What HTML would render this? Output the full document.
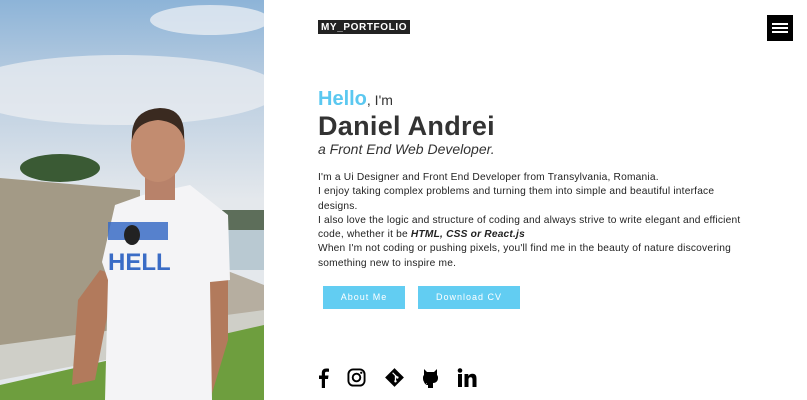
<!DOCTYPE html>
<html><head><style>
*{margin:0;padding:0;box-sizing:border-box}
body{width:807px;height:400px;overflow:hidden;background:#fff;font-family:"Liberation Sans",sans-serif;position:relative}
.photo{position:absolute;left:0;top:0;width:264px;height:400px}
.logo{position:absolute;left:318px;top:20px;background:#222;color:#fff;font-weight:bold;font-size:10px;letter-spacing:.6px;padding:1px 3px;height:14px;line-height:13px}
.menu{position:absolute;left:767px;top:15px;width:26px;height:26px;background:#000}
.menu i{position:absolute;left:5px;width:16px;height:2px;background:#fff}
.hello{position:absolute;left:318px;top:88px;font-size:14px;color:#333}
.hello b{color:#5bc8f0;font-size:20px}
h1{position:absolute;left:318px;top:111px;font-size:27px;color:#333;font-weight:bold;letter-spacing:.3px}
.sub{position:absolute;left:318px;top:141px;font-size:14px;font-style:italic;color:#333}
.p{position:absolute;left:318px;top:171px;font-size:10.2px;line-height:14.3px;color:#222;width:426px;letter-spacing:.2px}
.btn{position:absolute;top:286px;height:23px;background:#62cdf2;color:#fff;font-size:9px;letter-spacing:1px;text-align:center;line-height:23px}
.soc{position:absolute;top:368px}
</style></head><body>
<svg class="photo" viewBox="0 0 264 400">
<defs><linearGradient id="s" x1="0" y1="0" x2="0" y2="1"><stop offset="0" stop-color="#8db4d8"/><stop offset=".2" stop-color="#b8cce0"/><stop offset=".5" stop-color="#e4e8ec"/></linearGradient></defs>
<rect width="264" height="400" fill="url(#s)"/>
<ellipse cx="120" cy="90" rx="160" ry="35" fill="#eef0f2" opacity=".7"/>
<ellipse cx="210" cy="20" rx="60" ry="15" fill="#f2f4f6" opacity=".7"/>
<rect x="222" y="210" width="42" height="60" fill="#b9c9d2"/>
<rect x="222" y="210" width="42" height="20" fill="#5d6e5a"/>
<ellipse cx="60" cy="168" rx="40" ry="14" fill="#3a5a34"/>
<polygon points="0,178 140,190 140,350 0,355" fill="#a39a86"/>
<polygon points="225,270 264,285 264,320 225,320" fill="#b6aea0"/>
<polygon points="0,345 264,310 264,330 0,380" fill="#cfcfc8"/>
<polygon points="0,385 264,325 264,400 0,400" fill="#6e9e3e"/>
<polygon points="100,270 115,275 95,380 72,385 78,300" fill="#b27a5c"/>
<polygon points="205,275 228,275 228,340 210,400 190,400 200,330" fill="#b27a5c"/>
<polygon points="143,195 190,185 228,215 230,280 210,282 212,400 105,400 108,280 102,262 115,205" fill="#f4f4f6"/>
<rect x="145" y="170" width="30" height="30" fill="#b8826a"/>
<ellipse cx="158" cy="146" rx="27" ry="36" fill="#c28c70"/>
<path d="M132 140 Q130 110 160 108 Q186 108 184 140 Q180 122 158 120 Q136 122 132 140Z" fill="#3a2a20"/>
<text x="108" y="270" font-family="Liberation Sans" font-weight="bold" font-size="24" fill="#3a6cc6">HELL</text>
<rect x="108" y="222" width="60" height="18" fill="#3a6cc6" opacity=".85"/>
<ellipse cx="132" cy="235" rx="8" ry="10" fill="#222"/>
</svg>
<div class="logo">MY_PORTFOLIO</div>
<div class="menu"><i style="top:8px"></i><i style="top:12px"></i><i style="top:16px"></i></div>
<div class="hello"><b>Hello</b>, I'm</div>
<h1>Daniel Andrei</h1>
<div class="sub">a Front End Web Developer.</div>
<div class="p">I'm a Ui Designer and Front End Developer from Transylvania, Romania.<br>I enjoy taking complex problems and turning them into simple and beautiful interface designs.<br>I also love the logic and structure of coding and always strive to write elegant and efficient code, whether it be <b><i>HTML, CSS or React.js</i></b><br>When I'm not coding or pushing pixels, you'll find me in the beauty of nature discovering something new to inspire me.</div>
<div class="btn" style="left:323px;width:82px">About Me</div>
<div class="btn" style="left:418px;width:102px">Download CV</div>
<svg class="soc" style="left:316px" width="14" height="20" viewBox="0 0 14 20"><path d="M9 20V11h3l.5-3.5H9V5.5c0-1 .3-1.7 1.8-1.7H13V.7C12.5.6 11.4.5 10.2.5 7.6.5 5.8 2 5.8 5v2.5H3V11h2.8v9z" fill="#000"/></svg>
<svg class="soc" style="left:347px" width="19" height="19" viewBox="0 0 20 20"><rect x="1.5" y="1.5" width="17" height="17" rx="5" fill="none" stroke="#000" stroke-width="2"/><circle cx="10" cy="10" r="4" fill="none" stroke="#000" stroke-width="2"/><circle cx="15" cy="5" r="1.2"/></svg>
<svg class="soc" style="left:385px" width="19" height="19" viewBox="0 0 20 20"><rect x="3" y="3" width="14" height="14" transform="rotate(45 10 10)" fill="#000"/><path d="M8 5l3 3v6M11 8l2 2" stroke="#fff" stroke-width="1.3" fill="none"/><circle cx="11" cy="14" r="1.3" fill="#fff"/><circle cx="13" cy="10" r="1.3" fill="#fff"/></svg>
<svg class="soc" style="left:422px" width="17" height="20" viewBox="0 0 17 20"><path d="M2 1l3 3h7l3-3v6c1 1 1 2 1 3 0 3-2 5-5 5v5H6v-3c-2 0-3-1-4-3 1 0 2 1 3 2v-1c-3 0-4-2-4-5 0-1 0-2 1-3z" fill="#000"/></svg>
<svg class="soc" style="left:457px" width="20" height="19" viewBox="0 0 20 19"><rect x="1" y="6" width="4" height="13"/><circle cx="3" cy="2.5" r="2.3"/><path d="M7.5 6h3.8v2c.7-1.3 2.2-2.3 4.2-2.3 3.3 0 4 2.2 4 5V19h-4v-7c0-1.6-.3-2.8-1.9-2.8-1.7 0-2.1 1.3-2.1 2.8v7H7.5z"/></svg>
</body></html>
